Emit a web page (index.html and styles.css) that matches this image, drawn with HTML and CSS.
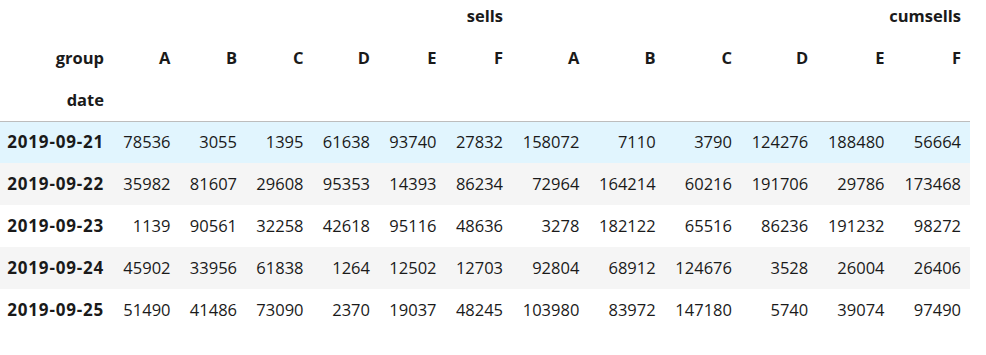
FILE: index.html
```html
<!DOCTYPE html>
<html lang="en">
<head>
    <meta charset="UTF-8">
    <title>DataFrame</title>
    <link rel="stylesheet" href="styles.css">
</head>
<body>
    <div class="output-area">
        <table class="dataframe">
            <colgroup>
                <col class="col-index">
                <col class="col-sells" span="6">
                <col class="col-cum" span="6">
            </colgroup>
            <thead>
                <tr>
                    <th></th>
                    <th colspan="6">sells</th>
                    <th colspan="6">cumsells</th>
                </tr>
                <tr>
                    <th>group</th>
                    <th>A</th><th>B</th><th>C</th><th>D</th><th>E</th><th>F</th>
                    <th>A</th><th>B</th><th>C</th><th>D</th><th>E</th><th>F</th>
                </tr>
                <tr>
                    <th>date</th>
                    <th></th><th></th><th></th><th></th><th></th><th></th>
                    <th></th><th></th><th></th><th></th><th></th><th></th>
                </tr>
            </thead>
            <tbody>
                <tr class="hover">
                    <th>2019-09-21</th>
                    <td>78536</td><td>3055</td><td>1395</td><td>61638</td><td>93740</td><td>27832</td>
                    <td>158072</td><td>7110</td><td>3790</td><td>124276</td><td>188480</td><td>56664</td>
                </tr>
                <tr>
                    <th>2019-09-22</th>
                    <td>35982</td><td>81607</td><td>29608</td><td>95353</td><td>14393</td><td>86234</td>
                    <td>72964</td><td>164214</td><td>60216</td><td>191706</td><td>29786</td><td>173468</td>
                </tr>
                <tr>
                    <th>2019-09-23</th>
                    <td>1139</td><td>90561</td><td>32258</td><td>42618</td><td>95116</td><td>48636</td>
                    <td>3278</td><td>182122</td><td>65516</td><td>86236</td><td>191232</td><td>98272</td>
                </tr>
                <tr>
                    <th>2019-09-24</th>
                    <td>45902</td><td>33956</td><td>61838</td><td>1264</td><td>12502</td><td>12703</td>
                    <td>92804</td><td>68912</td><td>124676</td><td>3528</td><td>26004</td><td>26406</td>
                </tr>
                <tr>
                    <th>2019-09-25</th>
                    <td>51490</td><td>41486</td><td>73090</td><td>2370</td><td>19037</td><td>48245</td>
                    <td>103980</td><td>83972</td><td>147180</td><td>5740</td><td>39074</td><td>97490</td>
                </tr>
            </tbody>
        </table>
    </div>
</body>
</html>
```

FILE: styles.css
```css
body {
    margin: 0;
    background: white;
    font-family: "Open Sans", "Noto Sans", sans-serif;
    color: #1a1a1a;
}

.output-area {
    margin-top: -5px;
}

.dataframe {
    border-collapse: collapse;
    border-spacing: 0;
    table-layout: fixed;
    width: 970px;
    font-size: 16.5px;
}

.col-index {
    width: 113px;
}

.col-sells {
    width: 66.5px;
}

.col-cum {
    width: 76.3px;
}

.dataframe th,
.dataframe td {
    padding: 0 9px 0 0;
    height: 42px;
    line-height: 22px;
    text-align: right;
    vertical-align: middle;
    white-space: nowrap;
    box-sizing: border-box;
}

.dataframe th {
    font-weight: bold;
}

.dataframe tbody th {
    font-size: 17px;
    letter-spacing: 0.8px;
}

.dataframe td {
    font-weight: normal;
}

.dataframe thead {
    border-bottom: 1px solid #bdbdbd;
}

.dataframe tbody tr:nth-child(even) {
    background: #f5f5f5;
}

.dataframe tbody tr.hover {
    background: #e1f5fe;
}
```
